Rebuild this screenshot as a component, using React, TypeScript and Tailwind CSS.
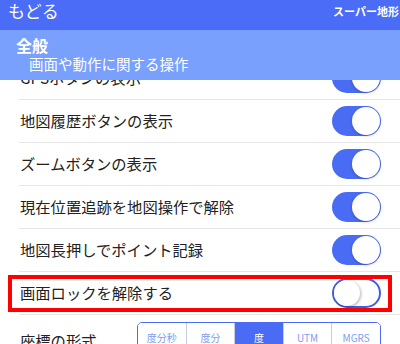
import React from "react";

const Toggle = ({ on }: { on: boolean }) =>
  on ? (
    <div className="w-[49px] h-[30px] rounded-full bg-[#4a6cf4] relative shrink-0">
      <div className="absolute right-[1px] top-[1px] w-[28px] h-[28px] rounded-full bg-white shadow-[0_1px_3px_rgba(0,0,0,0.25)]" />
    </div>
  ) : (
    <div className="w-[49px] h-[30px] rounded-full bg-white border-2 border-[#3d5fe6] relative shrink-0">
      <div className="absolute left-[0px] top-[0px] w-[26px] h-[26px] rounded-full bg-white shadow-[1px_1px_3px_rgba(0,0,0,0.3)]" />
    </div>
  );

const Row = ({ label, on, boxed }: { label: string; on: boolean; boxed?: boolean }) => (
  <div className="relative h-[43px] border-b border-[#e6e6e6] flex items-center justify-between pl-[1px] pr-[19px]">
    <span className="text-[15.3px] text-[#222] leading-none">{label}</span>
    <Toggle on={on} />
    {boxed && (
      <div className="absolute left-[-11px] top-[3px] w-[384px] h-[37px] border-4 border-[#ff0000]" />
    )}
  </div>
);

export default function App() {
  const segs = ["度分秒", "度分", "度", "UTM", "MGRS"];
  return (
    <div className="w-[400px] h-[344px] overflow-hidden bg-white relative font-['Noto_Sans_CJK_JP',sans-serif]">
      <div className="relative z-20 h-[30px] bg-[#4a6cf7] flex items-start justify-between">
        <span className="text-white text-[17px] leading-[22px] pl-[8px]">もどる</span>
        <span className="text-white text-[11px] font-bold pt-[4px] pr-[1px] leading-[14px]">スーパー地形</span>
      </div>
      <div className="relative z-10 h-[50px] bg-[#78a0fc] pl-[16px] pt-[6px]">
        <div className="text-white text-[16px] font-bold leading-[18px]">全般</div>
        <div className="text-white text-[14.5px] leading-[20px] pl-[13px]">画面や動作に関する操作</div>
      </div>
      <div className="-mt-[23px] ml-[19px]">
        <Row label="GPSボタンの表示" on />
        <Row label="地図履歴ボタンの表示" on />
        <Row label="ズームボタンの表示" on />
        <Row label="現在位置追跡を地図操作で解除" on />
        <Row label="地図長押しでポイント記録" on />
        <Row label="画面ロックを解除する" on={false} boxed />
        <div className="flex items-start pt-[7px] pl-[1px] pr-[19px]">
          <span className="text-[15.3px] text-[#222] leading-none mt-[11px] w-[117px]">座標の形式</span>
          <div className="flex-1 flex h-[30px] rounded-[5px] border border-[#4a6cf4] overflow-hidden">
            {segs.map((s, i) => (
              <div
                key={s}
                className={
                  "flex-1 flex items-center justify-center text-[10px] " +
                  (i > 0 ? "border-l border-[#c8cde0] " : "") +
                  (s === "度" ? "bg-[#4a6cf4] text-white" : "bg-white text-[#7e9cf2]")
                }
              >
                {s}
              </div>
            ))}
          </div>
        </div>
      </div>
    </div>
  );
}
